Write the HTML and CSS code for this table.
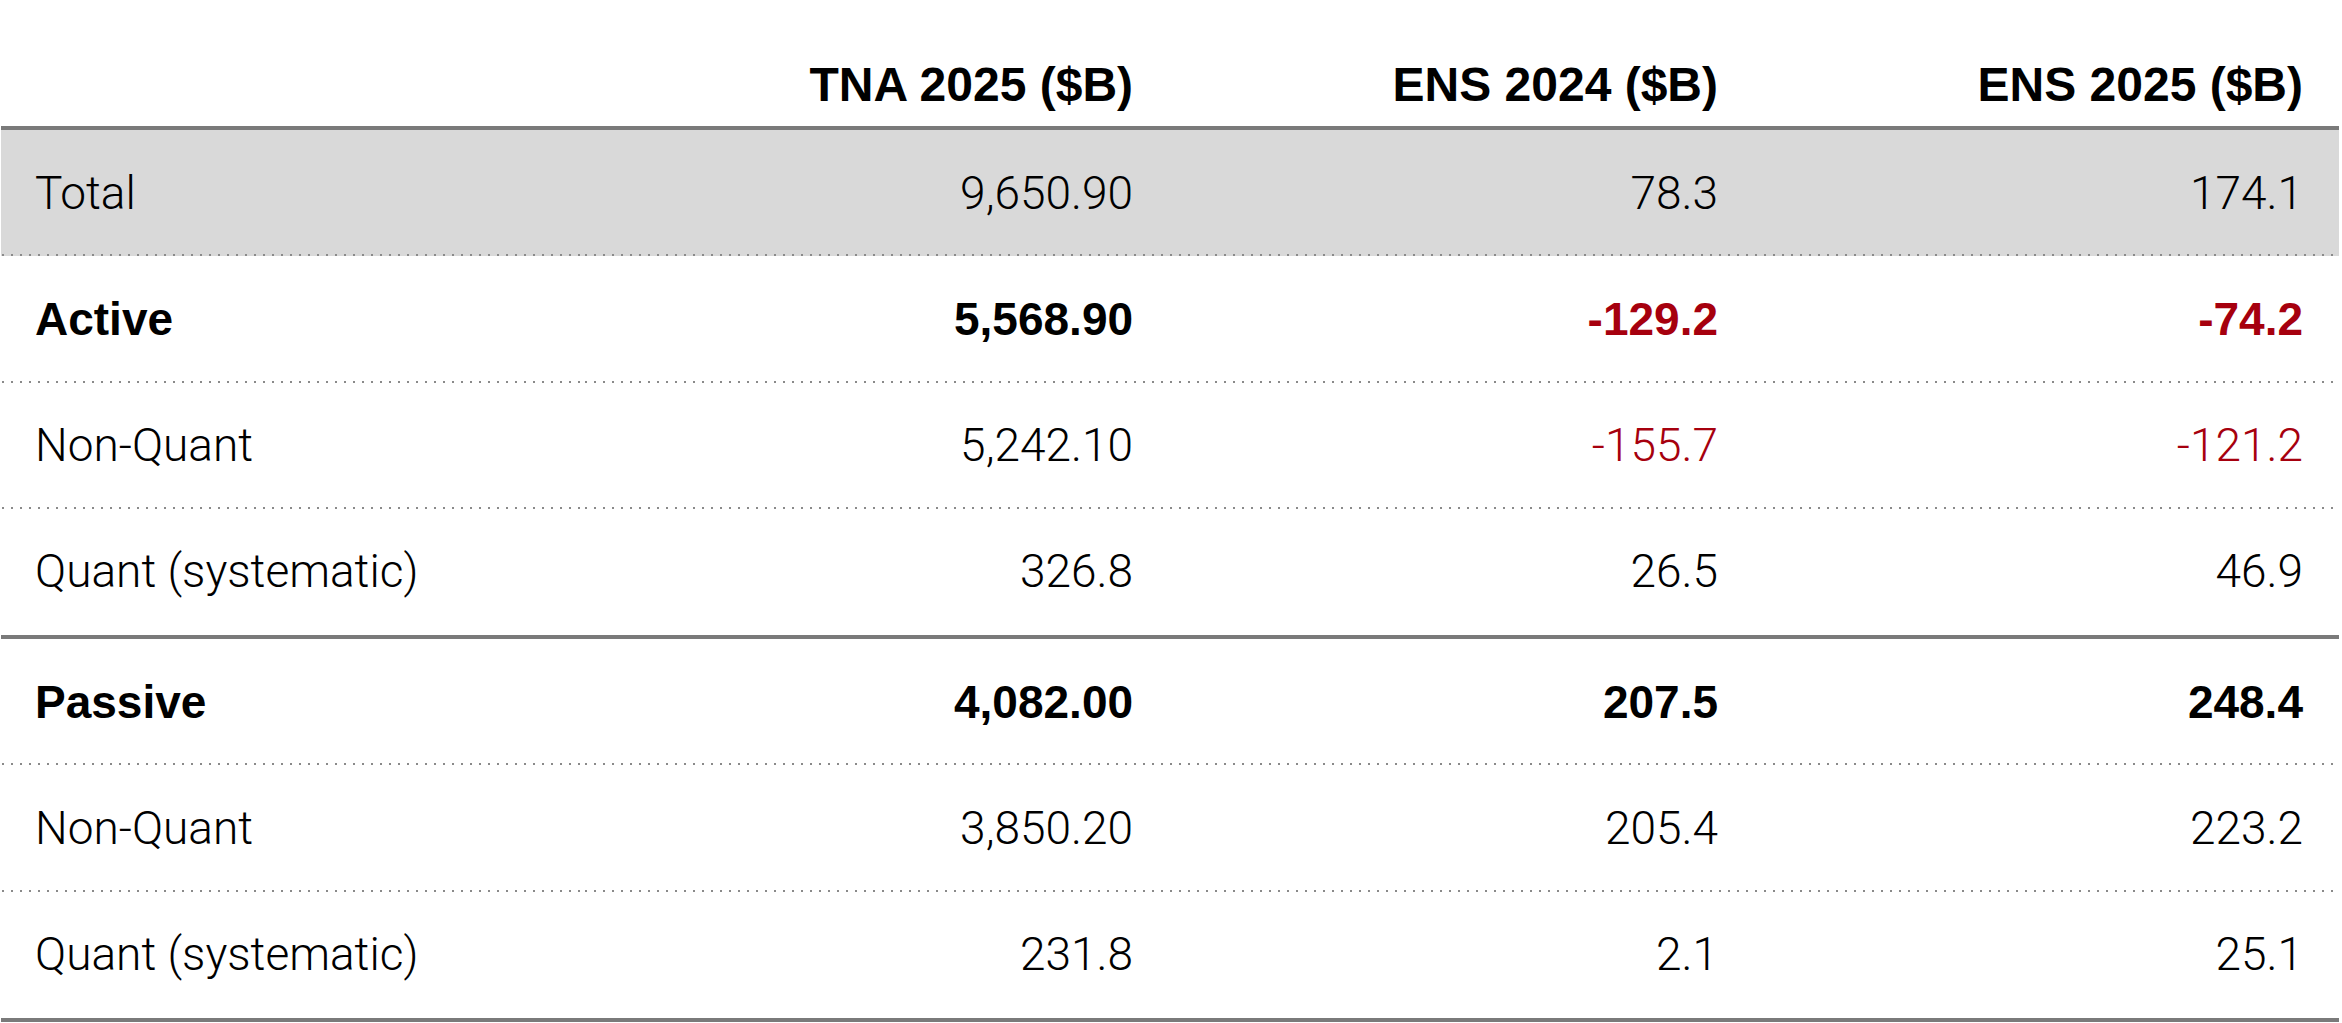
FILE: index.html
```html
<!DOCTYPE html>
<html lang="en">
<head>
<meta charset="utf-8">
<title>Estimated net flows by strategy</title>
<link rel="stylesheet" href="styles.css">
</head>
<body>
<table class="flows">
  <thead>
    <tr class="head-row">
      <th class="label"></th>
      <th class="num">TNA 2025 ($B)</th>
      <th class="num">ENS 2024 ($B)</th>
      <th class="num">ENS 2025 ($B)</th>
    </tr>
  </thead>
  <tbody>
    <tr class="row total">
      <td class="label">Total</td>
      <td class="num">9,650.90</td>
      <td class="num">78.3</td>
      <td class="num">174.1</td>
    </tr>
    <tr class="row strong">
      <td class="label">Active</td>
      <td class="num">5,568.90</td>
      <td class="num neg">-129.2</td>
      <td class="num neg">-74.2</td>
    </tr>
    <tr class="row">
      <td class="label">Non-Quant</td>
      <td class="num">5,242.10</td>
      <td class="num neg">-155.7</td>
      <td class="num neg">-121.2</td>
    </tr>
    <tr class="row last">
      <td class="label">Quant (systematic)</td>
      <td class="num">326.8</td>
      <td class="num">26.5</td>
      <td class="num">46.9</td>
    </tr>
  </tbody>
  <tbody>
    <tr class="row strong">
      <td class="label">Passive</td>
      <td class="num">4,082.00</td>
      <td class="num">207.5</td>
      <td class="num">248.4</td>
    </tr>
    <tr class="row">
      <td class="label">Non-Quant</td>
      <td class="num">3,850.20</td>
      <td class="num">205.4</td>
      <td class="num">223.2</td>
    </tr>
    <tr class="row last">
      <td class="label">Quant (systematic)</td>
      <td class="num">231.8</td>
      <td class="num">2.1</td>
      <td class="num">25.1</td>
    </tr>
  </tbody>
</table>
</body>
</html>
```
FILE: styles.css
```css
html, body {
  margin: 0;
  padding: 0;
  background: #ffffff;
}

body {
  font-family: "Roboto", "Liberation Sans", Arial, sans-serif;
  color: #000000;
}

.flows {
  margin-left: 1px;
  width: 2338px;
  border-collapse: separate;
  border-spacing: 0;
  table-layout: fixed;
}

.flows th,
.flows td {
  width: 25%;
  padding: 0;
}

.flows .label {
  text-align: left;
  padding-left: 34px;
}

.flows .num {
  text-align: right;
  padding-right: 36px;
}

/* header */
.head-row {
  height: 130px;
}

.head-row th {
  font-family: "Liberation Sans", Arial, sans-serif;
  font-weight: 700;
  font-size: 48px;
  line-height: 1.2;
  vertical-align: bottom;
  padding-bottom: 12px;
  border-bottom: 4px solid #7a7a7a;
}

/* body rows */
.row {
  height: 126.3px;
}

.row td {
  font-size: 46px;
  font-weight: 300;
  line-height: 1.2;
  vertical-align: middle;
  background-image: linear-gradient(to right, #8a8a8a 0 2px, transparent 2px 100%);
  background-size: 9px 2px;
  background-repeat: repeat-x;
  background-position: 1px 100%;
}

.row.total td {
  background-color: #d9d9d9;
}

.row.strong td {
  font-family: "Liberation Sans", Arial, sans-serif;
  font-weight: 700;
}

.row.last {
  height: 130.3px;
}

.row.last td {
  background-image: none;
  border-bottom: 4px solid #7a7a7a;
}

.neg {
  color: #a6000e;
}
```
